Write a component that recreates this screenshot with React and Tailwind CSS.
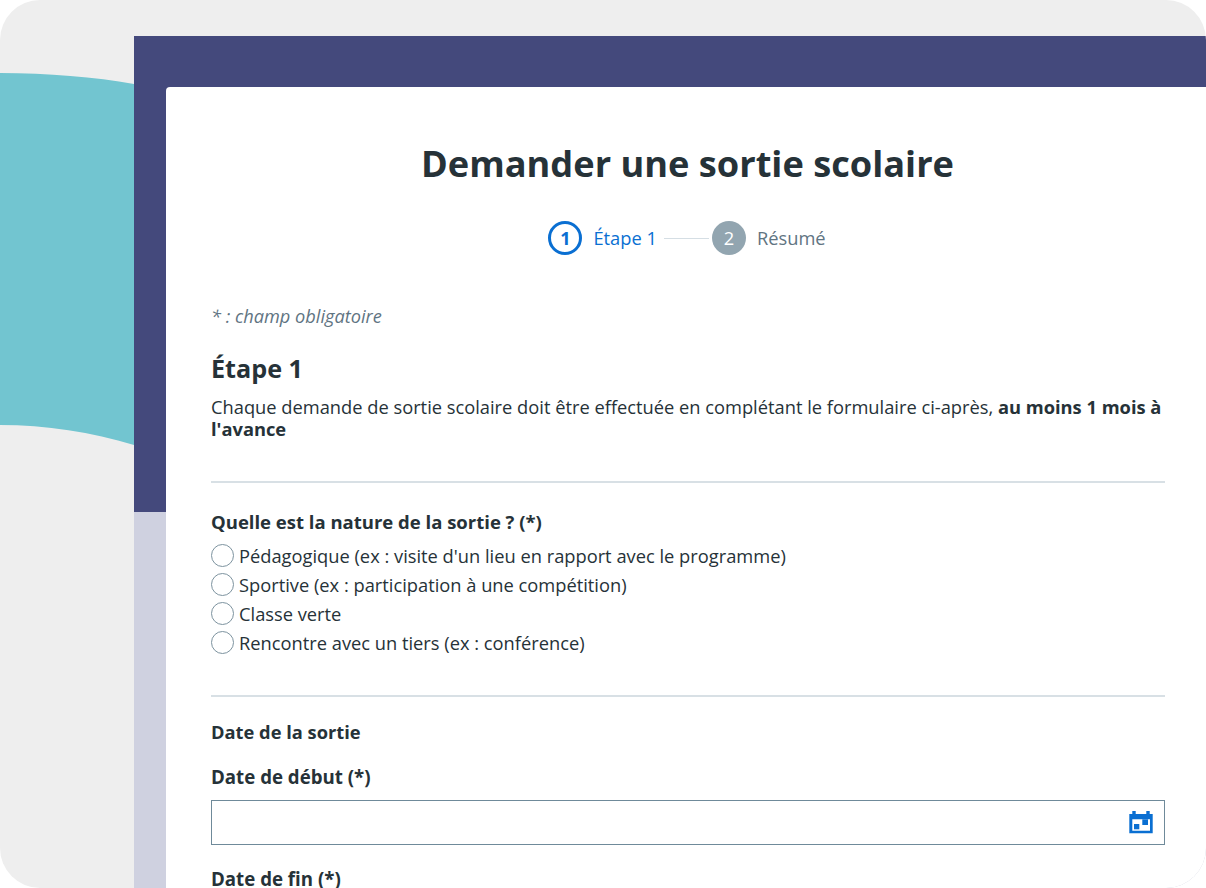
import { useState } from 'react';

const options = [
  "Pédagogique (ex : visite d'un lieu en rapport avec le programme)",
  'Sportive (ex : participation à une compétition)',
  'Classe verte',
  'Rencontre avec un tiers (ex : conférence)',
];

function CalendarIcon() {
  return (
    <svg width="24" height="24" viewBox="0 0 24 24" fill="#0a6fd2">
      <path fillRule="evenodd" d="M3.300 0h3.400v3h10.600V0h3.400v3h3v19.300H.3V3h3zM3.300 8.300v11.400H21V8.300z" />
      <rect x="5" y="13" width="5.300" height="5.300" />
      <rect x="13.300" y="8.300" width="5.700" height="5.700" />
    </svg>
  );
}

function Stepper() {
  return (
    <div className="flex items-center justify-center text-[18.3px] h-[34px] pr-[2px]">
      <span className="w-[34px] h-[34px] rounded-full border-[3px] border-[#0a6fd2] flex items-center justify-center text-[#0a6fd2] font-bold text-[18px]">1</span>
      <span className="ml-[11px] text-[#0a6fd2]">Étape 1</span>
      <span className="ml-[7px] mr-[3px] w-[45px] h-[1px] bg-[#d5dee4]" />
      <span className="w-[34px] h-[34px] rounded-full bg-[#92a5b0] flex items-center justify-center text-white">2</span>
      <span className="ml-[11px] text-[#5f7482]">Résumé</span>
    </div>
  );
}

export default function App() {
  const [nature, setNature] = useState(null);

  return (
    <div className="w-[1206px] h-[888px] bg-white font-['Open_Sans',sans-serif] text-[#263238]">
      <div className="relative w-full h-full rounded-[40px] bg-[#eeeeee] overflow-hidden pl-[134px] pt-[36px]">
        {/* teal wave behind the page */}
        <svg className="absolute left-0 top-0" width="134" height="888" viewBox="0 0 134 888">
          <path d="M0 73C48 73 95 77 134 84V445C92 432 46 425 0 425Z" fill="#72c5d0" />
        </svg>

        <div className="relative h-[852px] bg-[#cfd1e0] overflow-hidden">
          <div className="absolute inset-x-0 top-0 h-[476px] bg-[#44497c]" />

          <main className="relative ml-[32px] mt-[51px] h-[801px] bg-white rounded-tl-[4px] pl-[45px] pr-[41px] pt-[49px]">
            <h1 className="text-[36.2px] leading-[54px] font-bold text-center text-[#263238] pr-[1px]">Demander une sortie scolaire</h1>
            <div className="mt-[31px]">
              <Stepper />
            </div>

            <p className="mt-[49px] italic text-[18.2px] leading-[24px] text-[#5f7482]">* : champ obligatoire</p>

            <h2 className="mt-[22px] text-[25.2px] leading-[36px] font-bold">Étape 1</h2>
            <p className="mt-[10px] text-[18.3px] leading-[22px]">
              Chaque demande de sortie scolaire doit être effectuée en complétant le formulaire ci-après, <b>au moins 1 mois à l'avance</b>
            </p>

            <hr className="mt-[41px] border-0 h-[2px] bg-[#d8e0e5]" />

            <fieldset className="mt-[27px]">
              <legend className="text-[18.5px] leading-[24px] font-bold">Quelle est la nature de la sortie ? (*)</legend>
              <div className="mt-[7px] flex flex-col">
                {options.map((label, i) => (
                  <label key={label} className="flex items-center h-[29px] text-[18.3px]">
                    <input
                      type="radio"
                      name="nature"
                      checked={nature === i}
                      onChange={() => setNature(i)}
                      className="appearance-none w-[23px] h-[23px] rounded-full border-[1.5px] border-[#7d939f] bg-white checked:border-[#0a6fd2]"
                    />
                    <span className="ml-[5px]">{label}</span>
                  </label>
                ))}
              </div>
            </fieldset>

            <hr className="mt-[38px] border-0 h-[2px] bg-[#d8e0e5]" />

            <p className="mt-[23px] text-[18.3px] leading-[24px] font-bold">Date de la sortie</p>

            <label htmlFor="debut" className="block mt-[21px] text-[18.7px] leading-[24px] font-bold">Date de début (*)</label>
            <div className="relative mt-[11px] h-[45px] border border-[#6f8a9a] bg-white">
              <input id="debut" type="text" className="w-full h-full outline-none px-3" />
              <span className="absolute right-[11px] top-[10px]">
                <CalendarIcon />
              </span>
            </div>

            <label htmlFor="fin" className="block mt-[24px] text-[18.7px] leading-[19px] font-bold">Date de fin (*)</label>
          </main>
        </div>
      </div>
    </div>
  );
}
